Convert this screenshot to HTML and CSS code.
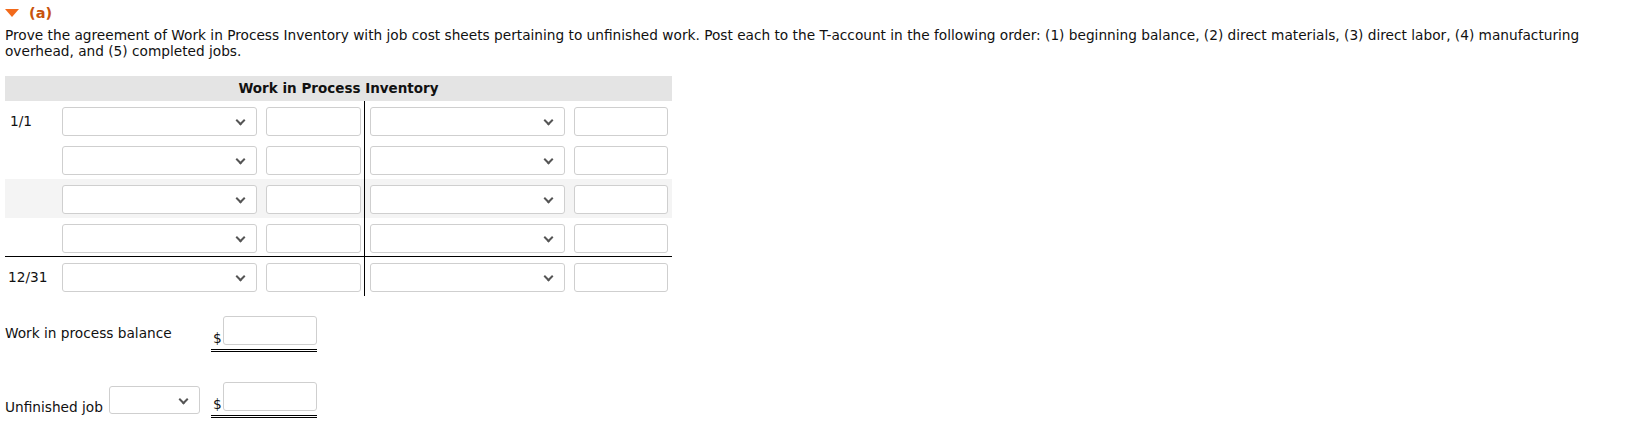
FILE: index.html
```html
<!DOCTYPE html>
<html>
<head>
<meta charset="utf-8">
<link rel="stylesheet" href="styles.css">
</head>
<body>
<div class="page">
  <div class="part-head">
    <span class="tri"></span>
    <span class="part-label">(a)</span>
  </div>
  <p class="prompt">Prove the agreement of Work in Process Inventory with job cost sheets pertaining to unfinished work. Post each to the T-account in the following order: (1) beginning balance, (2) direct materials, (3) direct labor, (4) manufacturing overhead, and (5) completed jobs.</p>

  <div class="taccount">
    <div class="t-title">Work in Process Inventory</div>
    <div class="t-row">
      <div class="t-left"><span class="t-date">1/1</span><span class="sel w195"><span class="chev"></span></span><span class="inp w95"></span></div>
      <div class="t-right"><span class="sel w195"><span class="chev"></span></span><span class="inp w94"></span></div>
    </div>
    <div class="t-row">
      <div class="t-left"><span class="t-date"></span><span class="sel w195"><span class="chev"></span></span><span class="inp w95"></span></div>
      <div class="t-right"><span class="sel w195"><span class="chev"></span></span><span class="inp w94"></span></div>
    </div>
    <div class="t-row shaded">
      <div class="t-left"><span class="t-date"></span><span class="sel w195"><span class="chev"></span></span><span class="inp w95"></span></div>
      <div class="t-right"><span class="sel w195"><span class="chev"></span></span><span class="inp w94"></span></div>
    </div>
    <div class="t-row last">
      <div class="t-left"><span class="t-date"></span><span class="sel w195"><span class="chev"></span></span><span class="inp w95"></span></div>
      <div class="t-right"><span class="sel w195"><span class="chev"></span></span><span class="inp w94"></span></div>
    </div>
    <div class="t-row">
      <div class="t-left"><span class="t-date d2">12/31</span><span class="sel w195"><span class="chev"></span></span><span class="inp w95"></span></div>
      <div class="t-right"><span class="sel w195"><span class="chev"></span></span><span class="inp w94"></span></div>
    </div>
  </div>

  <div class="bal-row first">
    <div class="bal-label"><span class="lbl">Work in process balance</span></div>
    <div class="amount"><span class="dollar">$</span><span class="inp w94"></span></div>
  </div>
  <div class="bal-row second">
    <div class="bal-label"><span class="lbl">Unfinished job</span><span class="sel w91"><span class="chev"></span></span></div>
    <div class="amount"><span class="dollar">$</span><span class="inp w94"></span></div>
  </div>
</div>
</body>
</html>
```

FILE: styles.css
```css
html, body {
  margin: 0;
  padding: 0;
  background: #fff;
}
body {
  font-family: "DejaVu Sans", Verdana, sans-serif;
  font-size: 13.7px;
  color: #111;
}
.page {
  padding: 5px 0 0 5px;
  width: 1600px;
}
.part-head {
  display: flex;
  align-items: center;
  height: 16px;
}
.tri {
  width: 0;
  height: 0;
  border-left: 7px solid transparent;
  border-right: 7px solid transparent;
  border-top: 8px solid #f26a1b;
  margin-right: 10px;
  margin-top: 0;
}
.part-label {
  font-weight: bold;
  font-size: 14.5px;
  color: #c8520c;
  margin-top: -1px;
}
.prompt {
  margin: 6px 0 0 0;
  line-height: 16px;
  width: 1600px;
}
.taccount {
  margin-top: 17px;
  width: 667px;
}
.t-title {
  height: 25px;
  line-height: 25px;
  background: #e4e4e4;
  text-align: center;
  font-weight: bold;
  font-size: 13.5px;
  color: #111;
}
.t-row {
  display: flex;
  height: 39px;
}
.t-row.shaded {
  background: #f4f4f4;
}
.t-row.last {
  height: 38px;
  border-bottom: 1px solid #000;
}
.t-left {
  display: flex;
  align-items: flex-start;
  width: 359px;
  padding-top: 6px;
  box-sizing: border-box;
}
.t-right {
  display: flex;
  align-items: flex-start;
  border-left: 1px solid #000;
  padding: 6px 0 0 5px;
  gap: 9px;
}
.t-date {
  width: 57px;
  padding-left: 5px;
  box-sizing: border-box;
  line-height: 29px;
}
.t-date.d2 {
  padding-left: 3px;
}
.t-left .inp {
  margin-left: 9px;
}
.sel, .inp {
  display: block;
  position: relative;
  height: 29px;
  box-sizing: border-box;
  border: 1px solid #cfcfcf;
  border-radius: 3px;
  background: #fff;
}
.w195 { width: 195px; }
.w95 { width: 95px; }
.w94 { width: 94px; }
.w91 { width: 91px; height: 28px; }
.chev {
  position: absolute;
  right: 12px;
  top: 9px;
  width: 5px;
  height: 5px;
  border-right: 2px solid #555;
  border-bottom: 2px solid #555;
  transform: rotate(45deg);
}
.bal-row {
  display: flex;
  align-items: flex-start;
}
.bal-row.first {
  margin-top: 20px;
}
.bal-row.second {
  margin-top: 30px;
}
.bal-label {
  width: 206px;
  display: flex;
  align-items: flex-start;
}
.bal-row.first .lbl {
  margin-top: 9px;
}
.bal-row.second .lbl {
  margin-top: 17px;
}
.bal-row.second .sel {
  margin-left: 6px;
  margin-top: 4px;
}
.amount {
  display: flex;
  align-items: flex-end;
  border-bottom: 3px double #000;
  padding-bottom: 4px;
}
.dollar {
  width: 12px;
  padding-left: 2px;
  box-sizing: border-box;
  line-height: 14px;
}
```
